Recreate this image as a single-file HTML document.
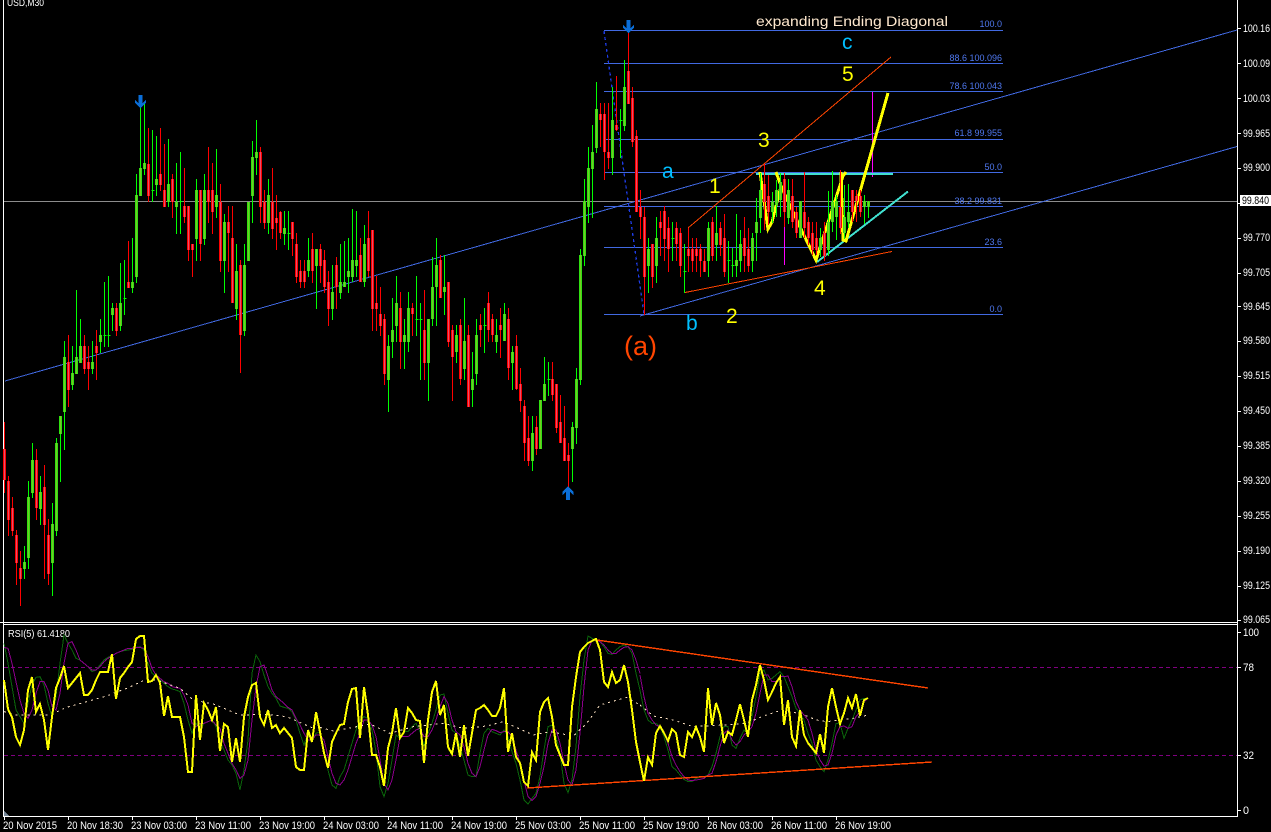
<!DOCTYPE html>
<html><head><meta charset="utf-8"><title>USD,M30</title>
<style>
html,body{margin:0;padding:0;background:#000;width:1271px;height:832px;overflow:hidden}
svg{display:block;position:absolute;left:0;top:0}
text{font-family:"Liberation Sans",sans-serif}
.a{fill:#fff;font-size:11px}
.v{vector-effect:non-scaling-stroke;fill:none;stroke-width:1}
</style></head><body>
<svg width="1271" height="832" viewBox="0 0 1271 832" shape-rendering="crispEdges">
<defs>
<path id="rb" d="M4 449V480M8 481V520M12 508V531M16 535V563M20 568V579M36 460V508M44 487V525M48 535V574M68 362V390M84 346V369M88 362V369M96 346V353M116 308V331M128 282V288M148 164V196M160 174V185M164 190V207M172 179V202M184 206V217M188 206V250M192 244V250M200 190V244M208 190V202M212 190V212M220 202V261M228 222V233M232 238V303M240 265V335M260 152V207M264 202V223M272 202V229M276 218V223M280 212V233M292 222V239M296 244V277M300 271V282M304 271V282M312 249V271M320 249V266M324 260V287M328 282V309M336 265V287M360 255V282M368 238V271M372 230V309M376 303V309M380 314V326M384 319V374M400 308V342M412 308V314M424 330V363M440 260V298M448 282V342M452 330V357M460 325V379M468 335V407M480 325V330M488 303V330M492 319V335M500 325V330M508 319V368M516 346V389M520 384V401M524 406V443M528 438V461M536 427V449M552 379V395M556 384V428M560 422V443M564 438V461M568 455V461M600 114V120M604 114V152M608 152V158M616 125V130M628 71V104M632 98V142M636 136V212M640 207V217M644 217V277M652 244V277M660 222V228M664 211V239M668 228V249M676 228V244M680 233V266M688 249V256M692 249V261M696 249V256M700 249V261M704 261V272M712 222V256M720 228V245M724 238V272M744 238V256M748 249V266M764 184V202M768 196V212M784 179V212M792 196V222M796 212V233M804 212V228M808 222V238M812 233V250M816 238V250M824 233V256M840 207V228M852 190V212M856 196V201M860 196V212"/>
<path id="gb" d="M24 562V569M28 497V558M32 460V493M40 492V509M52 524V563M56 443V531M60 416V434M64 357V412M72 373V385M76 357V374M80 346V363M92 362V369M100 335V342M112 308V315M120 303V326M132 282V288M136 195V277M140 168V196M144 163V169M156 179V185M168 184V202M176 202V207M196 190V239M204 190V239M216 195V207M224 222V261M236 271V309M244 265V331M248 202V261M252 157V196M256 152V158M268 195V223M284 228V234M308 260V271M316 249V266M332 292V309M340 282V293M344 282V287M348 271V277M352 260V277M356 260V266M364 244V282M388 346V380M392 330V342M396 303V326M404 335V342M408 308V342M428 319V363M432 287V319M436 265V287M444 287V292M456 335V352M464 341V369M472 379V390M476 335V374M496 335V342M504 314V341M512 352V363M532 433V461M540 400V449M544 384V401M572 427V449M576 379V428M580 255V380M584 201V256M588 168V207M592 152V169M596 109V148M612 120V158M624 87V126M648 249V266M656 238V266M708 228V261M716 233V245M736 260V266M740 244V261M752 238V261M756 222V233M760 190V218M772 202V212M776 190V205M780 182V200M788 190V218M800 201V238M820 238V250M828 222V250M832 202V222M836 201V217M844 217V233M848 212V222M864 201V207M868 201V207"/>
</defs>

<!-- frame -->
<g stroke="#fff" fill="none">
<path d="M3.5 0V816M1237.5 0V816M0 622.5H1238M3 624.5H1238M3 816.5H1238"/>
<path d="M1238 28.5h3M1238 63.5h3M1238 98.5h3M1238 133.5h3M1238 168.5h3M1238 203.5h3M1238 238.5h3M1238 273.5h3M1238 306.5h3M1238 341.5h3M1238 376.5h3M1238 411.5h3M1238 446.5h3M1238 481.5h3M1238 516.5h3M1238 551.5h3M1238 586.5h3M1238 620.5h3M1238 632.5h3M1238 667.5h3M1238 755.5h3M1238 810.5h3"/>
<path d="M4.5 816v4M68.5 816v4M132.5 816v4M196.5 816v4M260.5 816v4M324.5 816v4M388.5 816v4M452.5 816v4M516.5 816v4M580.5 816v4M644.5 816v4M708.5 816v4M772.5 816v4M836.5 816v4"/>
</g>

<!-- price scale -->
<g class="a">
<text x="1243" y="32" textLength="27" lengthAdjust="spacingAndGlyphs" class="a">100.16</text>
<text x="1243" y="67" textLength="27" lengthAdjust="spacingAndGlyphs" class="a">100.09</text>
<text x="1243" y="102" textLength="27" lengthAdjust="spacingAndGlyphs" class="a">100.03</text>
<text x="1243" y="137" textLength="27" lengthAdjust="spacingAndGlyphs" class="a">99.965</text>
<text x="1243" y="171" textLength="27" lengthAdjust="spacingAndGlyphs" class="a">99.900</text>
<text x="1243" y="241" textLength="27" lengthAdjust="spacingAndGlyphs" class="a">99.770</text>
<text x="1243" y="276" textLength="27" lengthAdjust="spacingAndGlyphs" class="a">99.705</text>
<text x="1243" y="310" textLength="27" lengthAdjust="spacingAndGlyphs" class="a">99.645</text>
<text x="1243" y="344" textLength="27" lengthAdjust="spacingAndGlyphs" class="a">99.580</text>
<text x="1243" y="379" textLength="27" lengthAdjust="spacingAndGlyphs" class="a">99.515</text>
<text x="1243" y="414" textLength="27" lengthAdjust="spacingAndGlyphs" class="a">99.450</text>
<text x="1243" y="449" textLength="27" lengthAdjust="spacingAndGlyphs" class="a">99.385</text>
<text x="1243" y="484" textLength="27" lengthAdjust="spacingAndGlyphs" class="a">99.320</text>
<text x="1243" y="519" textLength="27" lengthAdjust="spacingAndGlyphs" class="a">99.255</text>
<text x="1243" y="554" textLength="27" lengthAdjust="spacingAndGlyphs" class="a">99.190</text>
<text x="1243" y="589" textLength="27" lengthAdjust="spacingAndGlyphs" class="a">99.125</text>
<text x="1243" y="623" textLength="27" lengthAdjust="spacingAndGlyphs" class="a">99.065</text>
<text x="1243" y="636" textLength="16" lengthAdjust="spacingAndGlyphs" class="a">100</text>
<text x="1243" y="671" textLength="11" lengthAdjust="spacingAndGlyphs" class="a">78</text>
<text x="1243" y="759" textLength="11" lengthAdjust="spacingAndGlyphs" class="a">32</text>
<text x="1243" y="814" textLength="6" lengthAdjust="spacingAndGlyphs" class="a">0</text>
</g>
<rect x="1240" y="195" width="31" height="11" fill="#fff"/>
<text x="1242" y="204" textLength="27" lengthAdjust="spacingAndGlyphs" style="font-size:11px;fill:#000">99.840</text>

<!-- time scale -->
<g>
<text x="3" y="829" textLength="54" lengthAdjust="spacingAndGlyphs" class="a">20 Nov 2015</text>
<text x="67" y="829" textLength="56" lengthAdjust="spacingAndGlyphs" class="a">20 Nov 18:30</text>
<text x="131" y="829" textLength="56" lengthAdjust="spacingAndGlyphs" class="a">23 Nov 03:00</text>
<text x="195" y="829" textLength="56" lengthAdjust="spacingAndGlyphs" class="a">23 Nov 11:00</text>
<text x="259" y="829" textLength="56" lengthAdjust="spacingAndGlyphs" class="a">23 Nov 19:00</text>
<text x="323" y="829" textLength="56" lengthAdjust="spacingAndGlyphs" class="a">24 Nov 03:00</text>
<text x="387" y="829" textLength="56" lengthAdjust="spacingAndGlyphs" class="a">24 Nov 11:00</text>
<text x="451" y="829" textLength="56" lengthAdjust="spacingAndGlyphs" class="a">24 Nov 19:00</text>
<text x="515" y="829" textLength="56" lengthAdjust="spacingAndGlyphs" class="a">25 Nov 03:00</text>
<text x="579" y="829" textLength="56" lengthAdjust="spacingAndGlyphs" class="a">25 Nov 11:00</text>
<text x="643" y="829" textLength="56" lengthAdjust="spacingAndGlyphs" class="a">25 Nov 19:00</text>
<text x="707" y="829" textLength="56" lengthAdjust="spacingAndGlyphs" class="a">26 Nov 03:00</text>
<text x="771" y="829" textLength="56" lengthAdjust="spacingAndGlyphs" class="a">26 Nov 11:00</text>
<text x="835" y="829" textLength="56" lengthAdjust="spacingAndGlyphs" class="a">26 Nov 19:00</text>
</g>

<!-- main chart lines -->
<path d="M4 201.5H1237" stroke="#8c8c8c" fill="none"/>
<g stroke="#4169e1" fill="none">
<path d="M604 30.5H1003M604 63.5H1003M604 91.5H1003M604 139.5H1003M604 172.5H1003M604 206.5H1003M604 247.5H1003M604 314.5H1003"/>
<path d="M5 381L1237 30M640 316L1237 146.5"/>
<path d="M604 31L644 314" stroke-dasharray="3 3" stroke-width="1.3" stroke="#1e3ce6"/>
</g>
<g fill="#4f78f0" style="font-size:9px" text-anchor="end" shape-rendering="auto">
<text x="1002" y="27">100.0</text>
<text x="1002" y="61">88.6 100.096</text>
<text x="1002" y="89">78.6 100.043</text>
<text x="1002" y="136">61.8 99.955</text>
<text x="1002" y="170">50.0</text>
<text x="1002" y="204">38.2 99.831</text>
<text x="1002" y="245">23.6</text>
<text x="1002" y="312">0.0</text>
</g>
<g fill="none">
<path d="M688 228L891 57M685 292.5L892 251.5" stroke="#ff4500"/>
<path d="M784.5 212V265M872.5 92V177" stroke="#ff00ff"/>
<path d="M756 174H893" stroke="#40e0d0" stroke-width="2.4"/>
<path d="M817 262L908 191.5" stroke="#40e0d0" stroke-width="2"/>
<path d="M760 172L768 229L772 222L781 186L776 172M781 186L800 227L816 260L843 176L846 172M841 172L843 240L846 241L888 93" stroke="#ffff00" stroke-width="3"/>
</g>

<!-- candles -->
<g transform="translate(.5,0)" fill="none">
<path stroke="#ff0000" d="M4 422V493M8 476V536M12 497V536M16 530V585M20 551V606M36 449V520M44 465V579M48 519V585M68 335V407M84 335V374M88 346V390M96 330V380M116 303V336M128 241V288M148 128V202M160 128V191M164 144V207M172 174V218M184 168V223M188 206V261M192 244V277M200 190V261M208 147V223M212 163V234M220 184V272M228 206V272M232 206V303M240 260V373M260 147V223M264 190V229M272 168V239M276 195V250M280 211V239M292 222V256M296 233V283M300 260V288M304 260V288M312 233V283M320 244V283M324 250V293M328 271V326M336 257V309M360 238V282M368 211V277M372 230V331M376 276V331M380 287V336M384 314V385M400 292V369M412 303V336M424 290V380M440 255V298M448 282V347M452 325V401M460 319V385M468 325V407M480 314V347M488 292V342M492 314V342M500 308V358M508 308V380M516 335V390M520 368V412M524 400V461M528 416V466M536 416V455M552 362V401M556 384V433M560 395V443M564 406V461M568 443V492M600 103V147M604 103V180M608 103V169M616 76V131M628 28V104M632 87V147M636 130V212M640 190V239M644 207V315M652 244V288M660 211V256M664 206V261M668 217V272M676 222V261M680 228V277M688 228V272M692 238V272M696 238V272M700 244V277M704 249V272M712 217V261M720 222V256M724 214V277M744 217V272M748 228V272M764 164V230M768 175V225M784 173V227M792 179V228M796 207V238M804 172V238M808 217V245M812 222V255M816 222V255M824 222V261M840 170V234M852 190V222M856 190V222M860 190V217"/>
<path stroke="#00ff00" d="M24 546V579M28 481V569M32 443V498M40 476V525M52 503V596M56 438V536M60 416V482M64 341V450M72 346V390M76 290V374M80 319V363M92 341V374M100 319V353M112 303V331M120 263V331M132 238V293M136 174V283M140 103V196M144 103V175M156 136V196M168 139V207M176 163V234M196 179V261M204 174V245M216 149V218M224 214V293M236 244V320M244 244V336M248 202V261M252 141V223M256 120V175M268 179V234M284 211V245M308 238V277M316 249V309M332 265V320M340 244V299M344 241V287M348 238V293M352 209V282M356 211V277M364 225V287M388 335V412M392 298V358M396 276V342M404 319V369M408 292V352M428 319V401M432 257V326M436 238V326M444 255V315M456 325V363M464 298V380M472 352V407M476 319V385M496 319V353M504 303V341M512 346V390M532 416V471M540 400V449M544 357V401M572 422V482M576 368V444M580 249V385M584 179V266M588 147V223M592 125V218M596 82V153M612 87V175M624 60V131M648 238V293M656 217V283M708 222V277M716 206V261M736 214V277M740 230V272M752 233V272M756 198V261M760 173V233M772 192V223M776 180V217M780 173V217M788 179V224M800 201V238M820 228V257M828 191V256M832 171V232M836 195V240M844 185V239M848 184V228M864 195V224M868 201V218"/>
<path stroke="#00ff00" d="M104 282V347M103 335.5h3M108 276V347M107 335.5h3M124 260V315M123 298.5h3M152 130V202M151 190.5h3M180 152V234M179 201.5h3M288 211V250M287 233.5h3M416 276V336M415 319.5h3M420 303V380M419 319.5h3M484 308V353M483 325.5h3M548 362V396M547 379.5h3M620 109V158M619 120.5h3M672 222V261M671 238.5h3M684 244V293M683 271.5h3M728 241V283M727 260.5h3M732 248V277M731 265.5h3"/>
<use href="#rb" stroke="#ff0000" stroke-width="3"/>
<use href="#rb" stroke="#e4506e" stroke-width="1"/>
<use href="#gb" stroke="#30e010" stroke-width="3"/>
<use href="#gb" stroke="#78c828" stroke-width="1"/>
</g>

<!-- arrows -->
<g fill="#0a6ed8">
<polygon points="138.5,95 142.5,95 142.5,103 146,100 146,103 140.5,108 135,103 135,100 138.5,103"/>
<polygon points="626.5,20 630.5,20 630.5,28 634,25 634,28 628.5,33 623,28 623,25 626.5,28"/>
<polygon points="566,500 570,500 570,492 573.5,495 573.5,492 568,486 562.5,492 562.5,495 566,492"/>
</g>

<!-- labels -->
<g shape-rendering="auto">
<text x="756" y="26" textLength="192" lengthAdjust="spacingAndGlyphs" style="font-size:14px" fill="#ffe9cf">expanding Ending Diagonal</text>
<g style="font-size:21px" fill="#00bfff">
<text x="662" y="178">a</text><text x="686" y="330">b</text><text x="842" y="49">c</text>
</g>
<g style="font-size:21px" fill="#ffff00">
<text x="709" y="193">1</text><text x="726" y="323">2</text><text x="758" y="147">3</text><text x="814" y="295">4</text><text x="842" y="81">5</text>
</g>
<text x="624" y="355" style="font-size:27px" fill="#ff4500">(a)</text>
<text x="7" y="6" textLength="37" lengthAdjust="spacingAndGlyphs" class="a" style="font-size:10px">USD,M30</text>
<text x="8" y="637" textLength="62" lengthAdjust="spacingAndGlyphs" class="a" style="font-size:10.5px">RSI(5) 61.4180</text>
</g>

<!-- RSI -->
<path d="M4 667.5H1237M4 755.5H1237" stroke="#800080" stroke-dasharray="4 3" fill="none"/>
<polygon points="4,811 9,816 4,816" fill="#778899"/>
<g transform="translate(0,620) scale(.33333)">
<polyline class="v" stroke="#0a640a" points="12,70 24,130 36,200 48,270 60,290 72,310 84,250 96,195 108,172 120,170 132,195 144,250 156,290 168,230 180,130 192,45 204,70 216,90 228,115 240,120 252,130 264,140 276,155 288,150 300,135 312,120 324,112 336,108 348,100 360,95 372,92 384,90 396,88 408,82 420,80 432,90 444,130 456,160 468,170 480,180 492,190 504,200 516,207 528,210 540,215 552,250 564,300 576,340 588,310 600,330 612,310 624,305 636,300 648,320 660,365 672,390 684,420 696,435 708,460 720,510 732,450 744,360 756,160 768,105 780,125 792,165 804,200 816,220 828,235 840,258 852,262 864,265 876,275 888,300 900,340 912,375 924,340 936,360 948,340 960,335"/>
<polyline class="v" stroke="#8b008b" points="12,82 24,85 36,130 48,185 60,240 72,280 84,295 96,270 108,220 120,185 132,185 144,210 156,260 168,270 180,220 192,130 204,70 216,65 228,90 240,120 252,130 264,140 276,150 288,150 300,140 312,125 324,115 336,108 348,100 360,95 372,90 384,85 396,85 408,82 420,82 432,85 444,110 456,145 468,165 480,175 492,185 504,190 516,200 528,203 540,205 552,225 564,255 576,310 588,320 600,310 612,310 624,305 636,300 648,315 660,325 672,370 684,400 696,430 708,450 720,475 732,465 744,420 756,300 768,200 780,140 792,135 804,170 816,210 828,230 840,240 852,250 864,262 876,270 888,295 900,315 912,340 924,360 936,360 948,345 960,345"/>
<polyline class="v" stroke="#ffe4c4" stroke-dasharray="2 4" points="12,275 48,285 96,285 150,285 200,262 260,245 320,228 380,205 430,182 470,180 540,205 580,240 640,252 720,285 800,283 860,290 940,325"/>
</g>
<g transform="translate(320,620) scale(.33333)">
<polyline class="v" stroke="#0a640a" points="0,340 12,400 24,450 36,495 48,505 60,470 72,450 84,410 96,370 108,330 120,300 132,290 144,295 156,330 168,395 180,500 192,530 204,490 216,420 228,345 240,355 252,335 264,335 276,320 288,310 300,335 312,375 324,340 336,310 348,270 360,225 372,222 384,280 396,330 408,340 420,380 432,420 444,465 456,470 468,470 480,400 492,340 504,325 516,335 528,340 540,345 552,330 564,350 576,395 588,430 600,480 612,540 624,552 636,535 648,520 660,470 672,390 684,320 696,315 708,350 720,400 732,490 744,518 756,480 768,380 780,230 792,120 804,48 816,55 828,60 840,65 852,80 864,100 876,103 888,90 900,80 912,75 924,80 936,100 948,160 960,210"/>
<polyline class="v" stroke="#8b008b" points="0,345 12,360 24,410 36,460 48,490 60,495 72,480 84,450 96,410 108,370 120,340 132,300 144,300 156,315 168,350 180,420 192,490 204,510 216,480 228,420 240,350 252,350 264,350 276,340 288,330 300,325 312,350 324,350 336,330 348,300 360,260 372,230 384,250 396,300 408,335 420,345 432,380 444,430 456,460 468,470 480,440 492,390 504,345 516,328 528,332 540,338 552,335 564,335 576,350 588,390 600,430 612,480 624,530 636,542 648,530 660,490 672,440 684,370 696,330 708,330 720,370 732,430 744,480 756,495 768,450 780,340 792,200 804,90 816,62 828,60 840,65 852,75 864,90 876,100 888,100 900,90 912,82 924,80 936,90 948,120 960,160"/>
<polyline class="v" stroke="#ffe4c4" stroke-dasharray="2 4" points="0,322 40,333 100,322 150,312 210,340 280,320 370,310 430,325 500,318 550,305 640,345 690,335 760,348 800,310 840,255 920,232 960,255"/>
</g>
<g transform="translate(640,620) scale(.33333)">
<polyline class="v" stroke="#0a640a" points="0,210 12,270 24,300 36,310 48,310 60,320 72,350 84,390 96,440 108,450 120,465 132,478 144,485 156,485 168,475 180,472 192,470 204,465 216,440 228,400 240,350 252,320 264,320 276,375 288,385 300,355 312,330 324,340 336,290 348,230 360,160 372,150 384,180 396,175 408,165 420,155 432,170 444,200 456,230 468,265 480,280 492,300 504,340 516,370 528,420 540,440 552,455 564,420 576,370 588,310 600,310 612,355 624,325 636,300 648,270 660,240 672,235 684,235"/>
<polyline class="v" stroke="#8b008b" points="0,165 12,230 24,280 36,300 48,315 60,320 72,335 84,370 96,410 108,435 120,455 132,470 144,480 156,482 168,480 180,478 192,475 204,465 216,460 228,425 240,380 252,340 264,330 276,360 288,375 300,365 312,345 324,335 336,320 348,280 360,220 372,165 384,165 396,185 408,185 420,170 432,170 444,168 456,200 468,245 480,270 492,285 504,300 516,340 528,390 540,420 552,438 564,435 576,400 588,345 600,320 612,318 624,325 636,320 648,290 660,275 672,245 684,235"/>
<polyline class="v" stroke="#ffe4c4" stroke-dasharray="2 4" points="0,255 40,288 100,300 160,320 250,315 320,310 370,288 420,272 480,280 530,300 560,305 640,295 685,285"/>
</g>
<path d="M597 640L928 688M527 788L932 762" stroke="#ff4500" stroke-width="1.4" fill="none"/>
<polyline fill="none" stroke="#ffff00" stroke-width="2" points="4,680 8,709 12,717 16,737 20,745 24,730 28,690 32,677 36,712 40,704 44,720 48,750 52,717 56,688 60,678 64,666 68,688 72,683 76,678 80,673 84,695 88,695 92,690 96,680 100,672 104,672 108,672 112,654 116,699 120,678 124,673 128,667 132,662 136,639 140,636 144,636 148,682 152,681 156,675 160,683 164,716 168,696 172,717 176,717 180,717 184,737 188,772 192,772 196,695 200,740 204,703 208,710 212,720 216,707 220,751 224,724 228,727 232,762 236,738 240,762 244,717 248,697 252,685 256,683 260,717 264,725 268,710 272,728 276,725 280,733 284,728 288,733 292,738 296,767 300,770 304,770 308,730 312,742 316,712 320,732 324,753 328,768 332,742 336,733 340,725 344,724 348,702 352,689 356,688 360,738 364,687 368,715 372,755 376,755 380,767 384,786 388,748 392,733 396,708 400,738 404,732 408,708 412,713 416,720 420,721 424,763 428,720 432,692 436,681 440,715 444,705 448,747 452,754 456,733 460,757 464,725 468,756 472,733 476,710 480,708 484,705 488,710 492,716 496,716 500,708 504,688 508,752 512,733 516,757 520,763 524,782 528,786 532,752 536,760 540,712 544,702 548,698 552,717 556,745 560,755 564,765 568,765 572,707 576,677 580,652 584,647 588,643 592,641 596,639 600,650 604,682 608,687 612,672 616,683 620,680 624,665 628,682 632,710 636,742 640,762 644,781 648,757 652,765 656,733 660,726 664,733 668,741 672,729 676,733 680,755 684,757 688,732 692,737 696,727 700,737 704,752 708,688 712,725 716,703 720,715 724,743 728,732 732,735 736,720 740,704 744,720 748,737 752,700 756,685 760,665 764,680 768,700 772,692 776,683 780,677 784,725 788,700 792,737 796,746 800,710 804,735 808,743 812,748 816,753 820,734 824,753 828,707 832,688 836,707 840,724 844,713 848,698 852,708 856,694 860,716 864,700 868,698"/>
</svg>
</body></html>
